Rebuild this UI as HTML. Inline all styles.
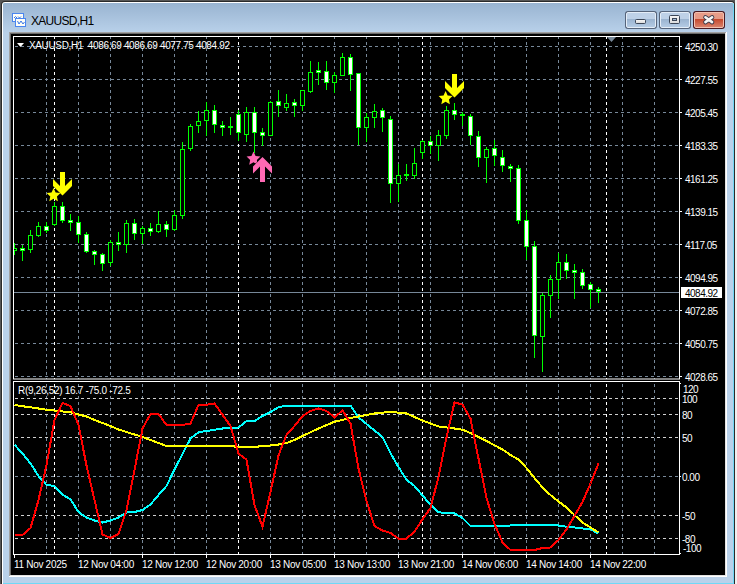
<!DOCTYPE html>
<html><head><meta charset="utf-8"><style>
html,body{margin:0;padding:0;width:737px;height:584px;overflow:hidden;background:#f0f0f0;position:relative;font-family:"Liberation Sans",sans-serif;}
.a{position:absolute}
.btn{top:11px;width:32px;height:18px;background:#56647a;border-radius:3px}
.btn .bi{position:absolute;left:1px;top:1px;width:28px;height:14px;border:1px solid #e4edf7;border-radius:2px;background:linear-gradient(#bed1e7 0,#bed1e7 6px,#9ab3cf 6px,#b4cbe4 14px)}
.cl{background:#4a1a22}
.cl .bi{border-color:#f2c0b0;background:linear-gradient(#e89c88 0,#e59a86 6px,#c5472c 6px,#d9806a 14px)}
.ls{letter-spacing:-0.3px !important}
.lb{position:absolute;color:#fff;font-size:10px;letter-spacing:-0.5px;white-space:nowrap;line-height:12px}
</style></head><body>
<div class="a" style="left:0;top:0;width:735px;height:584px;background:#565656"></div>
<div class="a" style="left:1px;top:1px;width:734px;height:583px;background:#2a2a2a;border-radius:4px 4px 0 0"></div>
<div class="a" style="left:2px;top:2px;width:732px;height:582px;background:#fff;border-radius:3px 3px 0 0"></div>
<div class="a" style="left:3px;top:3px;width:731px;height:581px;background:#6fd8f6;border-radius:2px 2px 0 0"></div>
<div class="a" style="left:3px;top:3px;width:730px;height:580px;background:linear-gradient(#99b4d1,#b9d1ea 30px,#b9d1ea);border-radius:2px 2px 0 0"></div>
<div class="a" style="left:9px;top:32px;width:718px;height:545px;background:#fff"></div>
<div class="a" style="left:9px;top:32px;width:717px;height:544px;background:#a0a0a0"></div>
<div class="a" style="left:10px;top:33px;width:716px;height:543px;background:#e3e3e3"></div>
<div class="a" style="left:10px;top:33px;width:715px;height:542px;background:#696969"></div>
<div class="a" style="left:11px;top:34px;width:714px;height:541px;background:#000"></div>
<div class="a" style="left:31px;top:13px;font-size:12px;letter-spacing:-0.7px;color:#000;line-height:16px">XAUUSD,H1</div>
<svg class="a" style="left:0;top:0" width="737" height="32">
<rect x="12.5" y="13.5" width="11" height="8" fill="#fffef6" stroke="#4a86f0" stroke-width="1"/>
<path d="M14 18 L15.5 16.5 L17 18 M18 16.5 L19.5 18 L21 16.5" fill="none" stroke="#3a78e8" stroke-width="1"/>
<rect x="15.5" y="18.5" width="10" height="8" fill="#fffef6" stroke="#4a86f0" stroke-width="1"/>
<path d="M17.5 21 L19 24 L21 21 L23 24 L24.5 22" fill="none" stroke="#3a78e8" stroke-width="1"/>
</svg>
<div class="a btn" style="left:625px"><div class="bi"></div></div>
<div class="a btn" style="left:659px"><div class="bi"></div></div>
<div class="a btn cl" style="left:693px"><div class="bi"></div></div>
<div class="a" style="left:635px;top:19px;width:9px;height:3px;border:1px solid #3c4656;border-radius:1.5px;background:linear-gradient(#f6f6f6,#dcdcdc)"></div>
<div class="a" style="left:669px;top:15px;width:9px;height:7px;border:1px solid #3c4656;border-radius:1.5px;background:linear-gradient(#f6f6f6,#dcdcdc)"></div>
<div class="a" style="left:672px;top:18px;width:3px;height:1px;border:1px solid #3c4656;background:#9fb7d3"></div>
<svg class="a" style="left:700px;top:13px" width="18" height="13">
<path d="M5.4 4.3 L12.1 9.1 M12.1 4.3 L5.4 9.1" stroke="#3a3a4a" stroke-width="4.4" stroke-linecap="round" fill="none"/>
<path d="M5.4 4.3 L12.1 9.1 M12.1 4.3 L5.4 9.1" stroke="#f6f6f6" stroke-width="2.6" stroke-linecap="round" fill="none"/>
</svg>
<svg width="737" height="584" style="position:absolute;left:0;top:0">
<defs><clipPath id="cm"><rect x="14" y="37" width="665" height="342"/></clipPath>
<clipPath id="ci"><rect x="14" y="382" width="665" height="172"/></clipPath></defs>
<line x1="15" y1="46.5" x2="679" y2="46.5" stroke="#778899" stroke-width="1" stroke-dasharray="3 3"/><line x1="15" y1="79.5" x2="679" y2="79.5" stroke="#778899" stroke-width="1" stroke-dasharray="3 3"/><line x1="15" y1="112.5" x2="679" y2="112.5" stroke="#778899" stroke-width="1" stroke-dasharray="3 3"/><line x1="15" y1="145.5" x2="679" y2="145.5" stroke="#778899" stroke-width="1" stroke-dasharray="3 3"/><line x1="15" y1="178.5" x2="679" y2="178.5" stroke="#778899" stroke-width="1" stroke-dasharray="3 3"/><line x1="15" y1="211.5" x2="679" y2="211.5" stroke="#778899" stroke-width="1" stroke-dasharray="3 3"/><line x1="15" y1="244.5" x2="679" y2="244.5" stroke="#778899" stroke-width="1" stroke-dasharray="3 3"/><line x1="15" y1="277.5" x2="679" y2="277.5" stroke="#778899" stroke-width="1" stroke-dasharray="3 3"/><line x1="15" y1="310.5" x2="679" y2="310.5" stroke="#778899" stroke-width="1" stroke-dasharray="3 3"/><line x1="15" y1="343.5" x2="679" y2="343.5" stroke="#778899" stroke-width="1" stroke-dasharray="3 3"/><line x1="15" y1="376.5" x2="679" y2="376.5" stroke="#778899" stroke-width="1" stroke-dasharray="3 3"/><line x1="46.5" y1="37" x2="46.5" y2="379" stroke="#778899" stroke-width="1" stroke-dasharray="3 3" stroke-dashoffset="1"/><line x1="46.5" y1="382" x2="46.5" y2="554" stroke="#778899" stroke-width="1" stroke-dasharray="3 3" stroke-dashoffset="4"/><line x1="78.5" y1="37" x2="78.5" y2="379" stroke="#778899" stroke-width="1" stroke-dasharray="3 3" stroke-dashoffset="1"/><line x1="78.5" y1="382" x2="78.5" y2="554" stroke="#778899" stroke-width="1" stroke-dasharray="3 3" stroke-dashoffset="4"/><line x1="110.5" y1="37" x2="110.5" y2="379" stroke="#778899" stroke-width="1" stroke-dasharray="3 3" stroke-dashoffset="1"/><line x1="110.5" y1="382" x2="110.5" y2="554" stroke="#778899" stroke-width="1" stroke-dasharray="3 3" stroke-dashoffset="4"/><line x1="142.5" y1="37" x2="142.5" y2="379" stroke="#778899" stroke-width="1" stroke-dasharray="3 3" stroke-dashoffset="1"/><line x1="142.5" y1="382" x2="142.5" y2="554" stroke="#778899" stroke-width="1" stroke-dasharray="3 3" stroke-dashoffset="4"/><line x1="174.5" y1="37" x2="174.5" y2="379" stroke="#778899" stroke-width="1" stroke-dasharray="3 3" stroke-dashoffset="1"/><line x1="174.5" y1="382" x2="174.5" y2="554" stroke="#778899" stroke-width="1" stroke-dasharray="3 3" stroke-dashoffset="4"/><line x1="206.5" y1="37" x2="206.5" y2="379" stroke="#778899" stroke-width="1" stroke-dasharray="3 3" stroke-dashoffset="1"/><line x1="206.5" y1="382" x2="206.5" y2="554" stroke="#778899" stroke-width="1" stroke-dasharray="3 3" stroke-dashoffset="4"/><line x1="270.5" y1="37" x2="270.5" y2="379" stroke="#778899" stroke-width="1" stroke-dasharray="3 3" stroke-dashoffset="1"/><line x1="270.5" y1="382" x2="270.5" y2="554" stroke="#778899" stroke-width="1" stroke-dasharray="3 3" stroke-dashoffset="4"/><line x1="302.5" y1="37" x2="302.5" y2="379" stroke="#778899" stroke-width="1" stroke-dasharray="3 3" stroke-dashoffset="1"/><line x1="302.5" y1="382" x2="302.5" y2="554" stroke="#778899" stroke-width="1" stroke-dasharray="3 3" stroke-dashoffset="4"/><line x1="334.5" y1="37" x2="334.5" y2="379" stroke="#778899" stroke-width="1" stroke-dasharray="3 3" stroke-dashoffset="1"/><line x1="334.5" y1="382" x2="334.5" y2="554" stroke="#778899" stroke-width="1" stroke-dasharray="3 3" stroke-dashoffset="4"/><line x1="366.5" y1="37" x2="366.5" y2="379" stroke="#778899" stroke-width="1" stroke-dasharray="3 3" stroke-dashoffset="1"/><line x1="366.5" y1="382" x2="366.5" y2="554" stroke="#778899" stroke-width="1" stroke-dasharray="3 3" stroke-dashoffset="4"/><line x1="398.5" y1="37" x2="398.5" y2="379" stroke="#778899" stroke-width="1" stroke-dasharray="3 3" stroke-dashoffset="1"/><line x1="398.5" y1="382" x2="398.5" y2="554" stroke="#778899" stroke-width="1" stroke-dasharray="3 3" stroke-dashoffset="4"/><line x1="430.5" y1="37" x2="430.5" y2="379" stroke="#778899" stroke-width="1" stroke-dasharray="3 3" stroke-dashoffset="1"/><line x1="430.5" y1="382" x2="430.5" y2="554" stroke="#778899" stroke-width="1" stroke-dasharray="3 3" stroke-dashoffset="4"/><line x1="462.5" y1="37" x2="462.5" y2="379" stroke="#778899" stroke-width="1" stroke-dasharray="3 3" stroke-dashoffset="1"/><line x1="462.5" y1="382" x2="462.5" y2="554" stroke="#778899" stroke-width="1" stroke-dasharray="3 3" stroke-dashoffset="4"/><line x1="494.5" y1="37" x2="494.5" y2="379" stroke="#778899" stroke-width="1" stroke-dasharray="3 3" stroke-dashoffset="1"/><line x1="494.5" y1="382" x2="494.5" y2="554" stroke="#778899" stroke-width="1" stroke-dasharray="3 3" stroke-dashoffset="4"/><line x1="526.5" y1="37" x2="526.5" y2="379" stroke="#778899" stroke-width="1" stroke-dasharray="3 3" stroke-dashoffset="1"/><line x1="526.5" y1="382" x2="526.5" y2="554" stroke="#778899" stroke-width="1" stroke-dasharray="3 3" stroke-dashoffset="4"/><line x1="558.5" y1="37" x2="558.5" y2="379" stroke="#778899" stroke-width="1" stroke-dasharray="3 3" stroke-dashoffset="1"/><line x1="558.5" y1="382" x2="558.5" y2="554" stroke="#778899" stroke-width="1" stroke-dasharray="3 3" stroke-dashoffset="4"/><line x1="590.5" y1="37" x2="590.5" y2="379" stroke="#778899" stroke-width="1" stroke-dasharray="3 3" stroke-dashoffset="1"/><line x1="590.5" y1="382" x2="590.5" y2="554" stroke="#778899" stroke-width="1" stroke-dasharray="3 3" stroke-dashoffset="4"/><line x1="622.5" y1="37" x2="622.5" y2="379" stroke="#778899" stroke-width="1" stroke-dasharray="3 3" stroke-dashoffset="1"/><line x1="622.5" y1="382" x2="622.5" y2="554" stroke="#778899" stroke-width="1" stroke-dasharray="3 3" stroke-dashoffset="4"/><line x1="654.5" y1="37" x2="654.5" y2="379" stroke="#778899" stroke-width="1" stroke-dasharray="3 3" stroke-dashoffset="1"/><line x1="654.5" y1="382" x2="654.5" y2="554" stroke="#778899" stroke-width="1" stroke-dasharray="3 3" stroke-dashoffset="4"/><line x1="54.5" y1="37" x2="54.5" y2="379" stroke="#ffffff" stroke-width="1" stroke-dasharray="3 3" stroke-dashoffset="1"/><line x1="54.5" y1="382" x2="54.5" y2="554" stroke="#ffffff" stroke-width="1" stroke-dasharray="3 3" stroke-dashoffset="4"/><line x1="238.5" y1="37" x2="238.5" y2="379" stroke="#ffffff" stroke-width="1" stroke-dasharray="3 3" stroke-dashoffset="1"/><line x1="238.5" y1="382" x2="238.5" y2="554" stroke="#ffffff" stroke-width="1" stroke-dasharray="3 3" stroke-dashoffset="4"/><line x1="422.5" y1="37" x2="422.5" y2="379" stroke="#ffffff" stroke-width="1" stroke-dasharray="3 3" stroke-dashoffset="1"/><line x1="422.5" y1="382" x2="422.5" y2="554" stroke="#ffffff" stroke-width="1" stroke-dasharray="3 3" stroke-dashoffset="4"/><line x1="606.5" y1="37" x2="606.5" y2="379" stroke="#ffffff" stroke-width="1" stroke-dasharray="3 3" stroke-dashoffset="1"/><line x1="606.5" y1="382" x2="606.5" y2="554" stroke="#ffffff" stroke-width="1" stroke-dasharray="3 3" stroke-dashoffset="4"/><line x1="15" y1="398.5" x2="679" y2="398.5" stroke="#d0d0d0" stroke-width="1" stroke-dasharray="3 3"/><line x1="15" y1="414.5" x2="679" y2="414.5" stroke="#d0d0d0" stroke-width="1" stroke-dasharray="3 3"/><line x1="15" y1="437.5" x2="679" y2="437.5" stroke="#d0d0d0" stroke-width="1" stroke-dasharray="3 3"/><line x1="15" y1="476.5" x2="679" y2="476.5" stroke="#778899" stroke-width="1" stroke-dasharray="3 3"/><line x1="15" y1="515.5" x2="679" y2="515.5" stroke="#d0d0d0" stroke-width="1" stroke-dasharray="3 3"/><line x1="15" y1="538.5" x2="679" y2="538.5" stroke="#d0d0d0" stroke-width="1" stroke-dasharray="3 3"/><rect x="13.5" y="36.5" width="666" height="342.5" fill="none" stroke="#fff" stroke-width="1"/><rect x="13.5" y="381.5" width="666" height="173" fill="none" stroke="#fff" stroke-width="1"/><rect x="680" y="46" width="2" height="1" fill="#fff"/><rect x="680" y="79" width="2" height="1" fill="#fff"/><rect x="680" y="112" width="2" height="1" fill="#fff"/><rect x="680" y="145" width="2" height="1" fill="#fff"/><rect x="680" y="178" width="2" height="1" fill="#fff"/><rect x="680" y="211" width="2" height="1" fill="#fff"/><rect x="680" y="244" width="2" height="1" fill="#fff"/><rect x="680" y="277" width="2" height="1" fill="#fff"/><rect x="680" y="310" width="2" height="1" fill="#fff"/><rect x="680" y="343" width="2" height="1" fill="#fff"/><rect x="680" y="376" width="2" height="1" fill="#fff"/><rect x="14" y="555" width="1" height="3" fill="#fff"/><rect x="78" y="555" width="1" height="3" fill="#fff"/><rect x="142" y="555" width="1" height="3" fill="#fff"/><rect x="206" y="555" width="1" height="3" fill="#fff"/><rect x="270" y="555" width="1" height="3" fill="#fff"/><rect x="334" y="555" width="1" height="3" fill="#fff"/><rect x="398" y="555" width="1" height="3" fill="#fff"/><rect x="462" y="555" width="1" height="3" fill="#fff"/><rect x="526" y="555" width="1" height="3" fill="#fff"/><rect x="590" y="555" width="1" height="3" fill="#fff"/><polygon points="607,37 616,37 611.5,42" fill="#778899"/><polygon points="17,43 24,43 20.5,47" fill="#fff"/><rect x="680" y="383" width="1" height="1" fill="#fff"/><rect x="680" y="476" width="1" height="1" fill="#fff"/><rect x="680" y="553" width="1" height="1" fill="#fff"/><rect x="14" y="292" width="665" height="1" fill="#778899"/><g clip-path="url(#cm)"><rect x="14" y="243" width="1" height="12" fill="#00ff00"/><rect x="12" y="248" width="5" height="3" fill="#00ff00"/><rect x="13" y="249" width="3" height="1" fill="#000"/><rect x="22" y="245" width="1" height="16" fill="#00ff00"/><rect x="20" y="248" width="5" height="3" fill="#00ff00"/><rect x="21" y="249" width="3" height="1" fill="#fff"/><rect x="30" y="230" width="1" height="23" fill="#00ff00"/><rect x="28" y="235" width="5" height="15" fill="#00ff00"/><rect x="29" y="236" width="3" height="13" fill="#000"/><rect x="38" y="222" width="1" height="15" fill="#00ff00"/><rect x="36" y="226" width="5" height="10" fill="#00ff00"/><rect x="37" y="227" width="3" height="8" fill="#000"/><rect x="46" y="222" width="1" height="11" fill="#00ff00"/><rect x="44" y="226" width="5" height="5" fill="#00ff00"/><rect x="45" y="227" width="3" height="3" fill="#fff"/><rect x="54" y="202" width="1" height="24" fill="#00ff00"/><rect x="52" y="206" width="5" height="19" fill="#00ff00"/><rect x="53" y="207" width="3" height="17" fill="#000"/><rect x="62" y="202" width="1" height="21" fill="#00ff00"/><rect x="60" y="206" width="5" height="15" fill="#00ff00"/><rect x="61" y="207" width="3" height="13" fill="#fff"/><rect x="70" y="214" width="1" height="17" fill="#00ff00"/><rect x="68" y="220" width="5" height="3" fill="#00ff00"/><rect x="69" y="221" width="3" height="1" fill="#fff"/><rect x="78" y="216" width="1" height="27" fill="#00ff00"/><rect x="76" y="222" width="5" height="13" fill="#00ff00"/><rect x="77" y="223" width="3" height="11" fill="#fff"/><rect x="86" y="232" width="1" height="21" fill="#00ff00"/><rect x="84" y="234" width="5" height="18" fill="#00ff00"/><rect x="85" y="235" width="3" height="16" fill="#fff"/><rect x="94" y="250" width="1" height="15" fill="#00ff00"/><rect x="92" y="251" width="5" height="4" fill="#00ff00"/><rect x="93" y="252" width="3" height="2" fill="#fff"/><rect x="102" y="253" width="1" height="18" fill="#00ff00"/><rect x="100" y="254" width="5" height="10" fill="#00ff00"/><rect x="101" y="255" width="3" height="8" fill="#fff"/><rect x="110" y="240" width="1" height="26" fill="#00ff00"/><rect x="108" y="242" width="5" height="21" fill="#00ff00"/><rect x="109" y="243" width="3" height="19" fill="#000"/><rect x="118" y="232" width="1" height="19" fill="#00ff00"/><rect x="116" y="242" width="5" height="3" fill="#00ff00"/><rect x="117" y="243" width="3" height="1" fill="#fff"/><rect x="126" y="220" width="1" height="33" fill="#00ff00"/><rect x="124" y="223" width="5" height="22" fill="#00ff00"/><rect x="125" y="224" width="3" height="20" fill="#000"/><rect x="134" y="219" width="1" height="21" fill="#00ff00"/><rect x="132" y="223" width="5" height="11" fill="#00ff00"/><rect x="133" y="224" width="3" height="9" fill="#fff"/><rect x="142" y="226" width="1" height="18" fill="#00ff00"/><rect x="140" y="228" width="5" height="6" fill="#00ff00"/><rect x="141" y="229" width="3" height="4" fill="#000"/><rect x="150" y="223" width="1" height="13" fill="#00ff00"/><rect x="148" y="228" width="5" height="4" fill="#00ff00"/><rect x="149" y="229" width="3" height="2" fill="#fff"/><rect x="158" y="211" width="1" height="22" fill="#00ff00"/><rect x="156" y="224" width="5" height="8" fill="#00ff00"/><rect x="157" y="225" width="3" height="6" fill="#000"/><rect x="166" y="221" width="1" height="16" fill="#00ff00"/><rect x="164" y="224" width="5" height="6" fill="#00ff00"/><rect x="165" y="225" width="3" height="4" fill="#fff"/><rect x="174" y="210" width="1" height="21" fill="#00ff00"/><rect x="172" y="215" width="5" height="15" fill="#00ff00"/><rect x="173" y="216" width="3" height="13" fill="#000"/><rect x="182" y="142" width="1" height="77" fill="#00ff00"/><rect x="180" y="149" width="5" height="67" fill="#00ff00"/><rect x="181" y="150" width="3" height="65" fill="#000"/><rect x="190" y="124" width="1" height="27" fill="#00ff00"/><rect x="188" y="126" width="5" height="23" fill="#00ff00"/><rect x="189" y="127" width="3" height="21" fill="#000"/><rect x="198" y="111" width="1" height="22" fill="#00ff00"/><rect x="196" y="121" width="5" height="5" fill="#00ff00"/><rect x="197" y="122" width="3" height="3" fill="#000"/><rect x="206" y="102" width="1" height="34" fill="#00ff00"/><rect x="204" y="110" width="5" height="11" fill="#00ff00"/><rect x="205" y="111" width="3" height="9" fill="#000"/><rect x="214" y="105" width="1" height="28" fill="#00ff00"/><rect x="212" y="110" width="5" height="15" fill="#00ff00"/><rect x="213" y="111" width="3" height="13" fill="#fff"/><rect x="222" y="121" width="1" height="15" fill="#00ff00"/><rect x="220" y="125" width="5" height="3" fill="#00ff00"/><rect x="221" y="126" width="3" height="1" fill="#fff"/><rect x="230" y="117" width="1" height="18" fill="#00ff00"/><rect x="228" y="126" width="5" height="2" fill="#00ff00"/><rect x="238" y="110" width="1" height="31" fill="#00ff00"/><rect x="236" y="114" width="5" height="19" fill="#00ff00"/><rect x="237" y="115" width="3" height="17" fill="#fff"/><rect x="246" y="107" width="1" height="35" fill="#00ff00"/><rect x="244" y="112" width="5" height="23" fill="#00ff00"/><rect x="245" y="113" width="3" height="21" fill="#000"/><rect x="254" y="107" width="1" height="46" fill="#00ff00"/><rect x="252" y="112" width="5" height="21" fill="#00ff00"/><rect x="253" y="113" width="3" height="19" fill="#fff"/><rect x="262" y="128" width="1" height="18" fill="#00ff00"/><rect x="260" y="132" width="5" height="4" fill="#00ff00"/><rect x="261" y="133" width="3" height="2" fill="#fff"/><rect x="270" y="101" width="1" height="35" fill="#00ff00"/><rect x="268" y="102" width="5" height="34" fill="#00ff00"/><rect x="269" y="103" width="3" height="32" fill="#000"/><rect x="278" y="90" width="1" height="27" fill="#00ff00"/><rect x="276" y="101" width="5" height="5" fill="#00ff00"/><rect x="277" y="102" width="3" height="3" fill="#fff"/><rect x="286" y="94" width="1" height="17" fill="#00ff00"/><rect x="284" y="103" width="5" height="5" fill="#00ff00"/><rect x="285" y="104" width="3" height="3" fill="#000"/><rect x="294" y="99" width="1" height="18" fill="#00ff00"/><rect x="292" y="102" width="5" height="4" fill="#00ff00"/><rect x="293" y="103" width="3" height="2" fill="#fff"/><rect x="302" y="90" width="1" height="21" fill="#00ff00"/><rect x="300" y="90" width="5" height="16" fill="#00ff00"/><rect x="301" y="91" width="3" height="14" fill="#000"/><rect x="310" y="61" width="1" height="32" fill="#00ff00"/><rect x="308" y="72" width="5" height="20" fill="#00ff00"/><rect x="309" y="73" width="3" height="18" fill="#000"/><rect x="318" y="62" width="1" height="23" fill="#00ff00"/><rect x="316" y="70" width="5" height="3" fill="#00ff00"/><rect x="317" y="71" width="3" height="1" fill="#fff"/><rect x="326" y="61" width="1" height="29" fill="#00ff00"/><rect x="324" y="71" width="5" height="12" fill="#00ff00"/><rect x="325" y="72" width="3" height="10" fill="#fff"/><rect x="334" y="72" width="1" height="21" fill="#00ff00"/><rect x="332" y="75" width="5" height="8" fill="#00ff00"/><rect x="333" y="76" width="3" height="6" fill="#000"/><rect x="342" y="53" width="1" height="23" fill="#00ff00"/><rect x="340" y="57" width="5" height="19" fill="#00ff00"/><rect x="341" y="58" width="3" height="17" fill="#000"/><rect x="350" y="54" width="1" height="37" fill="#00ff00"/><rect x="348" y="57" width="5" height="18" fill="#00ff00"/><rect x="349" y="58" width="3" height="16" fill="#fff"/><rect x="358" y="73" width="1" height="72" fill="#00ff00"/><rect x="356" y="73" width="5" height="55" fill="#00ff00"/><rect x="357" y="74" width="3" height="53" fill="#fff"/><rect x="366" y="113" width="1" height="29" fill="#00ff00"/><rect x="364" y="117" width="5" height="11" fill="#00ff00"/><rect x="365" y="118" width="3" height="9" fill="#000"/><rect x="374" y="104" width="1" height="24" fill="#00ff00"/><rect x="372" y="111" width="5" height="7" fill="#00ff00"/><rect x="373" y="112" width="3" height="5" fill="#000"/><rect x="382" y="108" width="1" height="24" fill="#00ff00"/><rect x="380" y="110" width="5" height="8" fill="#00ff00"/><rect x="381" y="111" width="3" height="6" fill="#fff"/><rect x="390" y="116" width="1" height="87" fill="#00ff00"/><rect x="388" y="119" width="5" height="65" fill="#00ff00"/><rect x="389" y="120" width="3" height="63" fill="#fff"/><rect x="398" y="164" width="1" height="38" fill="#00ff00"/><rect x="396" y="175" width="5" height="9" fill="#00ff00"/><rect x="397" y="176" width="3" height="7" fill="#000"/><rect x="406" y="164" width="1" height="17" fill="#00ff00"/><rect x="404" y="174" width="5" height="2" fill="#00ff00"/><rect x="414" y="148" width="1" height="31" fill="#00ff00"/><rect x="412" y="163" width="5" height="13" fill="#00ff00"/><rect x="413" y="164" width="3" height="11" fill="#000"/><rect x="422" y="140" width="1" height="19" fill="#00ff00"/><rect x="420" y="141" width="5" height="12" fill="#00ff00"/><rect x="421" y="142" width="3" height="10" fill="#000"/><rect x="430" y="136" width="1" height="18" fill="#00ff00"/><rect x="428" y="141" width="5" height="5" fill="#00ff00"/><rect x="429" y="142" width="3" height="3" fill="#fff"/><rect x="438" y="130" width="1" height="31" fill="#00ff00"/><rect x="436" y="135" width="5" height="11" fill="#00ff00"/><rect x="437" y="136" width="3" height="9" fill="#000"/><rect x="446" y="106" width="1" height="33" fill="#00ff00"/><rect x="444" y="110" width="5" height="26" fill="#00ff00"/><rect x="445" y="111" width="3" height="24" fill="#000"/><rect x="454" y="103" width="1" height="17" fill="#00ff00"/><rect x="452" y="110" width="5" height="5" fill="#00ff00"/><rect x="453" y="111" width="3" height="3" fill="#fff"/><rect x="462" y="112" width="1" height="14" fill="#00ff00"/><rect x="460" y="114" width="5" height="2" fill="#00ff00"/><rect x="470" y="114" width="1" height="31" fill="#00ff00"/><rect x="468" y="116" width="5" height="20" fill="#00ff00"/><rect x="469" y="117" width="3" height="18" fill="#fff"/><rect x="478" y="131" width="1" height="36" fill="#00ff00"/><rect x="476" y="136" width="5" height="22" fill="#00ff00"/><rect x="477" y="137" width="3" height="20" fill="#fff"/><rect x="486" y="147" width="1" height="36" fill="#00ff00"/><rect x="484" y="149" width="5" height="9" fill="#00ff00"/><rect x="485" y="150" width="3" height="7" fill="#000"/><rect x="494" y="140" width="1" height="26" fill="#00ff00"/><rect x="492" y="148" width="5" height="8" fill="#00ff00"/><rect x="493" y="149" width="3" height="6" fill="#fff"/><rect x="502" y="150" width="1" height="22" fill="#00ff00"/><rect x="500" y="157" width="5" height="9" fill="#00ff00"/><rect x="501" y="158" width="3" height="7" fill="#fff"/><rect x="510" y="164" width="1" height="18" fill="#00ff00"/><rect x="508" y="166" width="5" height="3" fill="#00ff00"/><rect x="509" y="167" width="3" height="1" fill="#fff"/><rect x="518" y="165" width="1" height="59" fill="#00ff00"/><rect x="516" y="168" width="5" height="53" fill="#00ff00"/><rect x="517" y="169" width="3" height="51" fill="#fff"/><rect x="526" y="210" width="1" height="50" fill="#00ff00"/><rect x="524" y="220" width="5" height="27" fill="#00ff00"/><rect x="525" y="221" width="3" height="25" fill="#fff"/><rect x="534" y="241" width="1" height="117" fill="#00ff00"/><rect x="532" y="246" width="5" height="90" fill="#00ff00"/><rect x="533" y="247" width="3" height="88" fill="#fff"/><rect x="542" y="293" width="1" height="79" fill="#00ff00"/><rect x="540" y="295" width="5" height="42" fill="#00ff00"/><rect x="541" y="296" width="3" height="40" fill="#000"/><rect x="550" y="275" width="1" height="43" fill="#00ff00"/><rect x="548" y="279" width="5" height="17" fill="#00ff00"/><rect x="549" y="280" width="3" height="15" fill="#000"/><rect x="558" y="253" width="1" height="46" fill="#00ff00"/><rect x="556" y="262" width="5" height="18" fill="#00ff00"/><rect x="557" y="263" width="3" height="16" fill="#000"/><rect x="566" y="254" width="1" height="25" fill="#00ff00"/><rect x="564" y="262" width="5" height="9" fill="#00ff00"/><rect x="565" y="263" width="3" height="7" fill="#fff"/><rect x="574" y="264" width="1" height="35" fill="#00ff00"/><rect x="572" y="270" width="5" height="3" fill="#00ff00"/><rect x="573" y="271" width="3" height="1" fill="#fff"/><rect x="582" y="269" width="1" height="20" fill="#00ff00"/><rect x="580" y="272" width="5" height="14" fill="#00ff00"/><rect x="581" y="273" width="3" height="12" fill="#fff"/><rect x="590" y="282" width="1" height="26" fill="#00ff00"/><rect x="588" y="284" width="5" height="6" fill="#00ff00"/><rect x="589" y="285" width="3" height="4" fill="#fff"/><rect x="598" y="287" width="1" height="16" fill="#00ff00"/><rect x="596" y="289" width="5" height="3" fill="#00ff00"/><rect x="597" y="290" width="3" height="1" fill="#fff"/></g><g clip-path="url(#ci)"><polyline points="14.5,444.75 22.5,453.50 30.5,463.50 38.5,476.00 46.5,485.00 54.5,486.00 62.5,494.50 70.5,499.50 78.5,512.00 86.5,517.50 94.5,520.50 102.5,522.50 110.5,520.50 118.5,517.50 126.5,512.50 134.5,512.00 142.5,510.00 150.5,504.50 158.5,495.00 166.5,486.00 174.5,469.50 182.5,454.00 190.5,438.50 198.5,432.25 206.5,431.00 214.5,429.75 222.5,428.50 230.5,428.00 238.5,427.50 246.5,421.00 254.5,421.00 262.5,416.00 270.5,412.00 278.5,407.25 286.5,405.50 294.5,405.50 302.5,405.50 310.5,405.50 318.5,405.50 326.5,405.50 334.5,405.50 342.5,405.50 350.5,405.50 358.5,417.50 366.5,424.00 374.5,430.50 382.5,437.00 390.5,453.00 398.5,467.00 406.5,479.75 414.5,486.00 422.5,495.50 430.5,504.75 438.5,512.25 446.5,513.00 454.5,513.50 462.5,518.00 470.5,526.00 478.5,526.00 486.5,526.00 494.5,526.00 502.5,526.00 510.5,525.50 518.5,525.40 526.5,525.30 534.5,525.20 542.5,525.10 550.5,525.00 558.5,525.50 566.5,526.75 574.5,527.50 582.5,528.50 590.5,529.25 598.5,533.50" fill="none" stroke="#00ffff" stroke-width="2" stroke-linejoin="miter" shape-rendering="crispEdges"/><polyline points="14.5,405.00 22.5,406.25 30.5,407.25 38.5,408.50 46.5,409.75 54.5,410.60 62.5,411.50 70.5,412.25 78.5,414.50 86.5,416.50 94.5,420.00 102.5,423.00 110.5,426.00 118.5,429.50 126.5,432.00 134.5,434.50 142.5,437.00 150.5,440.00 158.5,443.00 166.5,446.00 174.5,446.00 182.5,446.00 190.5,446.00 198.5,446.00 206.5,446.00 214.5,446.00 222.5,446.00 230.5,446.00 238.5,447.00 246.5,447.00 254.5,447.00 262.5,446.00 270.5,445.50 278.5,444.50 286.5,443.00 294.5,440.00 302.5,436.00 310.5,432.25 318.5,428.50 326.5,425.12 334.5,421.75 342.5,419.88 350.5,418.00 358.5,416.50 366.5,415.00 374.5,413.50 382.5,412.62 390.5,411.75 398.5,412.62 406.5,413.50 414.5,417.00 422.5,420.50 430.5,423.50 438.5,426.50 446.5,427.50 454.5,428.50 462.5,429.75 470.5,433.00 478.5,437.00 486.5,441.00 494.5,445.25 502.5,449.50 510.5,455.00 518.5,459.50 526.5,468.00 534.5,478.00 542.5,487.50 550.5,495.00 558.5,501.50 566.5,507.50 574.5,515.00 582.5,522.50 590.5,527.50 598.5,532.50" fill="none" stroke="#ffff00" stroke-width="2" stroke-linejoin="miter" shape-rendering="crispEdges"/><polyline points="14.5,535.00 22.5,535.00 30.5,528.00 38.5,500.00 46.5,465.00 54.5,420.00 62.5,403.00 70.5,406.00 78.5,425.00 86.5,465.50 94.5,500.00 102.5,534.50 110.5,538.00 118.5,534.00 126.5,510.00 134.5,470.00 142.5,428.50 150.5,414.00 158.5,414.00 166.5,425.00 174.5,425.00 182.5,425.00 190.5,423.50 198.5,404.75 206.5,404.75 214.5,403.50 222.5,414.75 230.5,426.00 238.5,453.50 246.5,459.75 254.5,505.00 262.5,526.75 270.5,491.75 278.5,455.50 286.5,434.75 294.5,426.00 302.5,416.00 310.5,411.00 318.5,408.50 326.5,411.00 334.5,417.25 342.5,410.50 350.5,423.50 358.5,468.50 366.5,501.00 374.5,526.00 382.5,530.50 390.5,533.00 398.5,538.50 406.5,538.50 414.5,531.75 422.5,519.25 430.5,508.00 438.5,477.00 446.5,437.50 454.5,402.25 462.5,404.75 470.5,418.50 478.5,458.50 486.5,498.00 494.5,524.00 502.5,542.50 510.5,550.00 518.5,550.00 526.5,550.00 534.5,550.00 542.5,548.00 550.5,547.50 558.5,540.00 566.5,529.50 574.5,516.00 582.5,502.00 590.5,483.50 598.5,463.50" fill="none" stroke="#ff0000" stroke-width="2" stroke-linejoin="miter" shape-rendering="crispEdges"/></g><polygon points="53.60,188.00 55.66,192.47 60.54,193.04 56.93,196.38 57.89,201.21 53.60,198.80 49.31,201.21 50.27,196.38 46.66,193.04 51.54,192.47" fill="#ffff00"/><polygon points="60.0,172 65.0,172 65.0,186 72.0,179 72.0,186 62.5,195.5 53.0,186 53.0,179 60.0,186" fill="#ffff00" stroke="#000" stroke-width="0.8" paint-order="stroke"/><polygon points="445.60,91.00 447.66,95.47 452.54,96.04 448.93,99.38 449.89,104.21 445.60,101.80 441.31,104.21 442.27,99.38 438.66,96.04 443.54,95.47" fill="#ffff00"/><polygon points="452.0,74 457.0,74 457.0,88 464.0,81 464.0,88 454.5,97.5 445.0,88 445.0,81 452.0,88" fill="#ffff00" stroke="#000" stroke-width="0.8" paint-order="stroke"/><polygon points="253.50,151.50 255.56,155.97 260.44,156.54 256.83,159.88 257.79,164.71 253.50,162.30 249.21,164.71 250.17,159.88 246.56,156.54 251.44,155.97" fill="#ff69b4"/><polygon points="262.5,157 272.0,166.5 272.0,173.5 265.0,166.5 265.0,182 260.0,182 260.0,166.5 253.0,173.5 253.0,166.5" fill="#ff69b4" stroke="#000" stroke-width="0.8" paint-order="stroke"/>
</svg>
<div class="lb" style="left:29px;top:40px;letter-spacing:-0.36px">XAUUSD,H1&nbsp; 4086.69 4086.69 4077.75 4084.92</div>
<div class="lb ls" style="left:18px;top:385px">R(9,26,52) 16.7 -75.0 -72.5</div>
<div class="lb" style="left:685px;top:42px">4250.30</div><div class="lb" style="left:685px;top:75px">4227.55</div><div class="lb" style="left:685px;top:108px">4205.45</div><div class="lb" style="left:685px;top:141px">4183.35</div><div class="lb" style="left:685px;top:174px">4161.25</div><div class="lb" style="left:685px;top:207px">4139.15</div><div class="lb" style="left:685px;top:240px">4117.05</div><div class="lb" style="left:685px;top:273px">4094.95</div><div class="lb" style="left:685px;top:306px">4072.85</div><div class="lb" style="left:685px;top:339px">4050.75</div><div class="lb" style="left:685px;top:372px">4028.65</div><div class="lb" style="left:683px;top:384px">120</div><div class="lb" style="left:682px;top:394px">100</div><div class="lb" style="left:682px;top:410px">80</div><div class="lb" style="left:682px;top:433px">50</div><div class="lb" style="left:682px;top:472px">0.00</div><div class="lb" style="left:682px;top:511px">-50</div><div class="lb" style="left:682px;top:534px">-80</div><div class="lb" style="left:683px;top:543px">-100</div><div class="lb ls" style="left:14px;top:559px">11 Nov 2025</div><div class="lb ls" style="left:78px;top:559px">12 Nov 04:00</div><div class="lb ls" style="left:142px;top:559px">12 Nov 12:00</div><div class="lb ls" style="left:206px;top:559px">12 Nov 20:00</div><div class="lb ls" style="left:270px;top:559px">13 Nov 05:00</div><div class="lb ls" style="left:334px;top:559px">13 Nov 13:00</div><div class="lb ls" style="left:398px;top:559px">13 Nov 21:00</div><div class="lb ls" style="left:462px;top:559px">14 Nov 06:00</div><div class="lb ls" style="left:526px;top:559px">14 Nov 14:00</div><div class="lb ls" style="left:590px;top:559px">14 Nov 22:00</div>
<div class="a" style="left:681px;top:287px;width:41px;height:11px;background:#fff"></div>
<div class="lb" style="left:685px;top:288px;color:#000">4084.92</div>
</body></html>
